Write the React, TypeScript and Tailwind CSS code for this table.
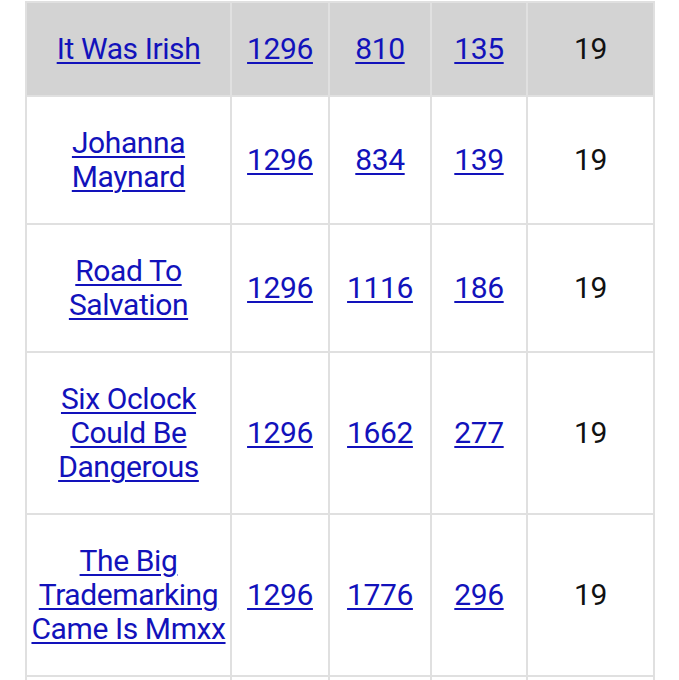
const rows = [
  { title: "It Was Irish", a: "1296", b: "810", c: "135", d: "19", shade: true },
  { title: "Johanna Maynard", a: "1296", b: "834", c: "139", d: "19" },
  { title: "Road To Salvation", a: "1296", b: "1116", c: "186", d: "19" },
  { title: "Six Oclock Could Be Dangerous", a: "1296", b: "1662", c: "277", d: "19" },
  { title: "The Big Trademarking Came Is Mmxx", a: "1296", b: "1776", c: "296", d: "19" },
];

const cell = "border-2 border-[#e0e0e0] px-[4px] py-[29px] text-center align-middle";
const link = "text-[#1212bb] underline decoration-2 underline-offset-[3px]";

export default function App() {
  return (
    <div className="h-[680px] overflow-hidden bg-white font-['Roboto',sans-serif] text-[30px] leading-[34px] tracking-[-0.4px] text-[#111]">
      <table className="ml-[25px] mt-[1px] table-fixed border-collapse">
        <colgroup>
          <col className="w-[205px]" />
          <col className="w-[98px]" />
          <col className="w-[102px]" />
          <col className="w-[96px]" />
          <col className="w-[127px]" />
        </colgroup>
        <tbody>
          {rows.map((r) => (
            <tr key={r.title} className={r.shade ? "bg-[#d3d3d3]" : "bg-white"}>
              <td className={cell}><a href="#" className={link}>{r.title}</a></td>
              <td className={cell}><a href="#" className={link}>{r.a}</a></td>
              <td className={cell}><a href="#" className={link}>{r.b}</a></td>
              <td className={cell}><a href="#" className={link}>{r.c}</a></td>
              <td className={cell}>{r.d}</td>
            </tr>
          ))}
          {/* next row, only its top edge shows */}
          <tr className="h-[92px] bg-white">
            <td className={cell} />
            <td className={cell} />
            <td className={cell} />
            <td className={cell} />
            <td className={cell} />
          </tr>
        </tbody>
      </table>
    </div>
  );
}
